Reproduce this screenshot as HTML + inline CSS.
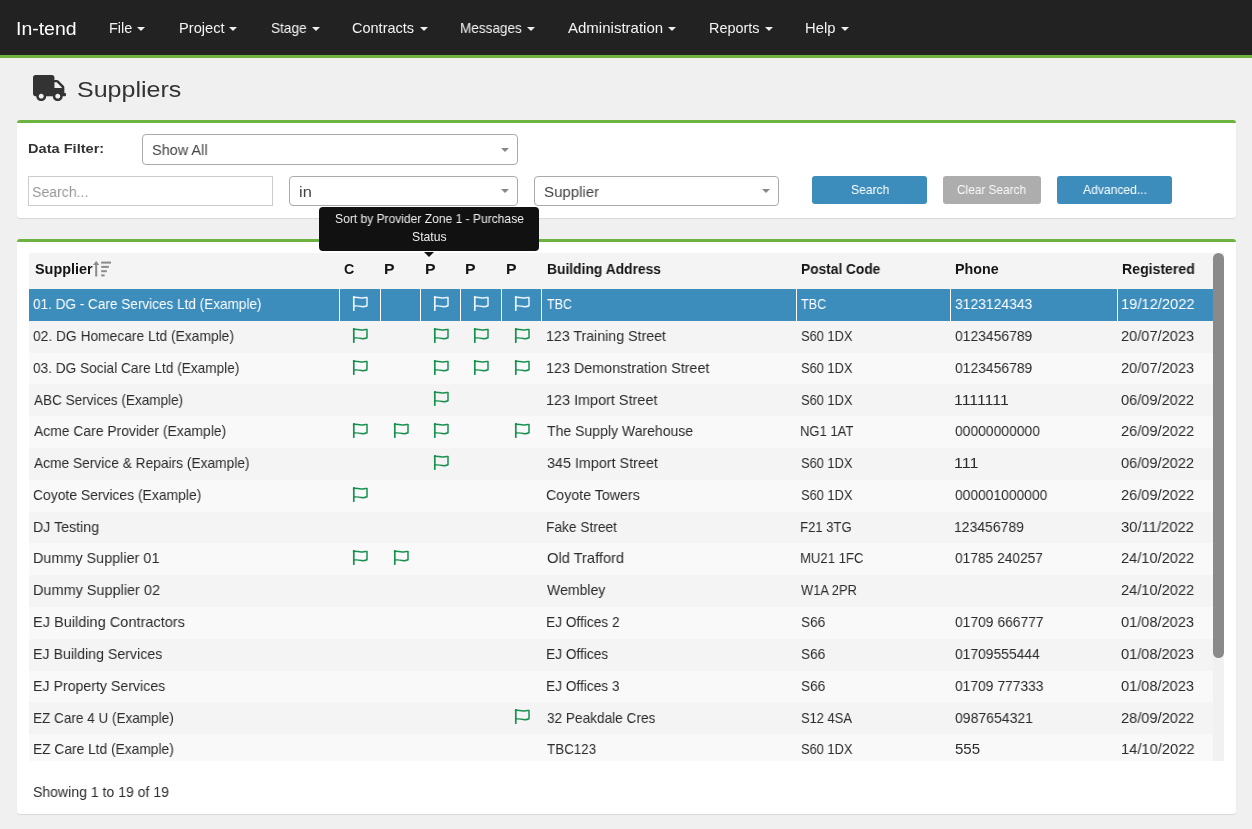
<!DOCTYPE html><html><head><meta charset="utf-8"><style>
html,body{margin:0;padding:0;}
body{width:1252px;height:829px;overflow:hidden;background:#f0f0f0;position:relative;font-family:"Liberation Sans", sans-serif;}
.t{position:absolute;line-height:1;white-space:nowrap;will-change:transform;}
.abs{position:absolute;}
</style></head><body>
<div class="abs" style="left:0;top:0;width:1252px;height:55px;background:#222;"></div>
<div class="abs" style="left:0;top:55px;width:1252px;height:3px;background:#6db33f;"></div>
<div class="t " style="left:15.95px;top:20px;font-size:18px;color:#fff;font-weight:normal;transform:scaleX(1.0810);transform-origin:0 0;">In-tend</div>
<div class="t " style="left:109.04px;top:21px;font-size:14.4px;color:#f4f4f4;font-weight:normal;transform:scaleX(1.0054);transform-origin:0 0;">File</div>
<div style="position:absolute;left:137px;top:27px;width:0;height:0;border-left:4.0px solid transparent;border-right:4.0px solid transparent;border-top:4px solid #eee;"></div>
<div class="t " style="left:178.53px;top:21px;font-size:14.4px;color:#f4f4f4;font-weight:normal;transform:scaleX(1.0170);transform-origin:0 0;">Project</div>
<div style="position:absolute;left:229px;top:27px;width:0;height:0;border-left:4.0px solid transparent;border-right:4.0px solid transparent;border-top:4px solid #eee;"></div>
<div class="t " style="left:270.58px;top:21px;font-size:14.4px;color:#f4f4f4;font-weight:normal;transform:scaleX(0.9507);transform-origin:0 0;">Stage</div>
<div style="position:absolute;left:312px;top:27px;width:0;height:0;border-left:4.0px solid transparent;border-right:4.0px solid transparent;border-top:4px solid #eee;"></div>
<div class="t " style="left:352.47px;top:21px;font-size:14.4px;color:#f4f4f4;font-weight:normal;transform:scaleX(1.0081);transform-origin:0 0;">Contracts</div>
<div style="position:absolute;left:420px;top:27px;width:0;height:0;border-left:4.0px solid transparent;border-right:4.0px solid transparent;border-top:4px solid #eee;"></div>
<div class="t " style="left:460.02px;top:21px;font-size:14.4px;color:#f4f4f4;font-weight:normal;transform:scaleX(0.9405);transform-origin:0 0;">Messages</div>
<div style="position:absolute;left:527px;top:27px;width:0;height:0;border-left:4.0px solid transparent;border-right:4.0px solid transparent;border-top:4px solid #eee;"></div>
<div class="t " style="left:568.22px;top:21px;font-size:14.4px;color:#f4f4f4;font-weight:normal;transform:scaleX(1.0431);transform-origin:0 0;">Administration</div>
<div style="position:absolute;left:668px;top:27px;width:0;height:0;border-left:4.0px solid transparent;border-right:4.0px solid transparent;border-top:4px solid #eee;"></div>
<div class="t " style="left:709.05px;top:21px;font-size:14.4px;color:#f4f4f4;font-weight:normal;">Reports</div>
<div style="position:absolute;left:765px;top:27px;width:0;height:0;border-left:4.0px solid transparent;border-right:4.0px solid transparent;border-top:4px solid #eee;"></div>
<div class="t " style="left:805.32px;top:21px;font-size:14.4px;color:#f4f4f4;font-weight:normal;transform:scaleX(1.0264);transform-origin:0 0;">Help</div>
<div style="position:absolute;left:841px;top:27px;width:0;height:0;border-left:4.0px solid transparent;border-right:4.0px solid transparent;border-top:4px solid #eee;"></div>
<svg class="abs" style="left:33px;top:75px" width="33" height="26" viewBox="0 0 640 512" preserveAspectRatio="none"><path fill="#333" d="M624 352h-16V243.9c0-12.7-5.1-24.9-14.1-33.9L494 110.1c-9-9-21.2-14.1-33.9-14.1H416V48c0-26.5-21.5-48-48-48H48C21.5 0 0 21.5 0 48v320c0 26.5 21.5 48 48 48h16c0 53 43 96 96 96s96-43 96-96h128c0 53 43 96 96 96s96-43 96-96h48c8.8 0 16-7.2 16-16v-32c0-8.8-7.2-16-16-16zM160 464c-26.5 0-48-21.5-48-48s21.5-48 48-48 48 21.5 48 48-21.5 48-48 48zm320 0c-26.5 0-48-21.5-48-48s21.5-48 48-48 48 21.5 48 48-21.5 48-48 48zm80-208H416V144h44.1l99.9 99.9V256z"/></svg>
<div class="t " style="left:77.07px;top:79px;font-size:21.8px;color:#333;font-weight:normal;transform:scaleX(1.1485);transform-origin:0 0;">Suppliers</div>
<div class="abs" style="left:17px;top:120px;width:1219px;height:98px;background:#fff;border-top:3px solid #6db33f;border-radius:3px;box-sizing:border-box;box-shadow:0 1px 1px rgba(0,0,0,0.1);"></div>
<div class="t " style="left:27.85px;top:142px;font-size:13.2px;color:#333;font-weight:bold;transform:scaleX(1.1064);transform-origin:0 0;">Data Filter:</div>
<div class="abs" style="left:142px;top:134px;width:376px;height:31px;box-sizing:border-box;border:1px solid #aaa;border-radius:4px;background:#fff;"></div>
<div class="t " style="left:151.95px;top:142px;font-size:15.2px;color:#444;font-weight:normal;transform:scaleX(0.9537);transform-origin:0 0;">Show All</div>
<div style="position:absolute;left:501px;top:147.5px;width:0;height:0;border-left:4.0px solid transparent;border-right:4.0px solid transparent;border-top:4px solid #888;"></div>
<div class="abs" style="left:28px;top:176px;width:245px;height:30px;box-sizing:border-box;border:1px solid #ccc;background:#fff;"></div>
<div class="t " style="left:31.97px;top:184px;font-size:15.2px;color:#999;font-weight:normal;transform:scaleX(0.9277);transform-origin:0 0;">Search...</div>
<div class="abs" style="left:289px;top:176px;width:229px;height:30px;box-sizing:border-box;border:1px solid #aaa;border-radius:4px;background:#fff;"></div>
<div class="t " style="left:298.93px;top:184px;font-size:15.2px;color:#444;font-weight:normal;transform:scaleX(1.0812);transform-origin:0 0;">in</div>
<div style="position:absolute;left:501px;top:189.0px;width:0;height:0;border-left:4.0px solid transparent;border-right:4.0px solid transparent;border-top:4px solid #888;"></div>
<div class="abs" style="left:534px;top:176px;width:245px;height:30px;box-sizing:border-box;border:1px solid #aaa;border-radius:4px;background:#fff;"></div>
<div class="t " style="left:544.02px;top:184px;font-size:15.2px;color:#444;font-weight:normal;transform:scaleX(0.9891);transform-origin:0 0;">Supplier</div>
<div style="position:absolute;left:762px;top:189.0px;width:0;height:0;border-left:4.0px solid transparent;border-right:4.0px solid transparent;border-top:4px solid #888;"></div>
<div class="abs" style="left:812px;top:176px;width:115px;height:28px;background:#3c8dbc;border-radius:3px;"></div>
<div class="t " style="left:850.56px;top:184px;font-size:12.6px;color:#fff;font-weight:normal;transform:scaleX(0.9586);transform-origin:0 0;">Search</div>
<div class="abs" style="left:943px;top:176px;width:98px;height:28px;background:#adadad;border-radius:3px;"></div>
<div class="t " style="left:957.41px;top:184px;font-size:12.6px;color:#fafafa;font-weight:normal;transform:scaleX(0.9393);transform-origin:0 0;">Clear Search</div>
<div class="abs" style="left:1057px;top:176px;width:115px;height:28px;background:#3c8dbc;border-radius:3px;"></div>
<div class="t " style="left:1082.74px;top:184px;font-size:12.6px;color:#fff;font-weight:normal;transform:scaleX(0.9613);transform-origin:0 0;">Advanced...</div>
<div class="abs" style="left:17px;top:239px;width:1219px;height:575px;background:#fff;border-top:3px solid #6db33f;border-radius:3px;box-sizing:border-box;box-shadow:0 1px 1px rgba(0,0,0,0.1);"></div>
<div class="abs" style="left:29px;top:253px;width:1195px;height:508px;overflow:hidden;background:#f9f9f9;">
<div class="abs" style="left:0;top:0;width:1184px;height:36px;background:#f4f4f4;"></div>
<div class="t " style="left:5.57px;top:9px;font-size:14.2px;color:#151515;font-weight:bold;transform:scaleX(1.0167);transform-origin:0 0;">Supplier</div>
<div class="t " style="left:315.16px;top:9px;font-size:14.2px;color:#151515;font-weight:bold;transform:scaleX(0.9569);transform-origin:0 0;">C</div>
<div class="t " style="left:354.97px;top:9px;font-size:14.2px;color:#151515;font-weight:bold;transform:scaleX(1.1119);transform-origin:0 0;">P</div>
<div class="t " style="left:395.87px;top:9px;font-size:14.2px;color:#151515;font-weight:bold;transform:scaleX(1.1119);transform-origin:0 0;">P</div>
<div class="t " style="left:435.97px;top:9px;font-size:14.2px;color:#151515;font-weight:bold;transform:scaleX(1.1119);transform-origin:0 0;">P</div>
<div class="t " style="left:476.57px;top:9px;font-size:14.2px;color:#151515;font-weight:bold;transform:scaleX(1.1119);transform-origin:0 0;">P</div>
<div class="t " style="left:517.70px;top:9px;font-size:14.2px;color:#151515;font-weight:bold;transform:scaleX(0.9747);transform-origin:0 0;">Building Address</div>
<div class="t " style="left:772.11px;top:9px;font-size:14.2px;color:#151515;font-weight:bold;transform:scaleX(0.9671);transform-origin:0 0;">Postal Code</div>
<div class="t " style="left:926.07px;top:9px;font-size:14.2px;color:#151515;font-weight:bold;transform:scaleX(1.0081);transform-origin:0 0;">Phone</div>
<div class="t " style="left:1093.48px;top:9px;font-size:14.2px;color:#151515;font-weight:bold;transform:scaleX(0.9921);transform-origin:0 0;">Registered</div>
<svg class="abs" style="left:63.5px;top:7.5px" width="19" height="16" viewBox="0 0 19 16"><g fill="#8a8a8a"><rect x="2.2" y="2.5" width="2" height="13"/><path d="M3.2 0 L0 4 H6.4 Z"/><rect x="8.2" y="0.6" width="9.8" height="2"/><rect x="8.2" y="4.9" width="7.6" height="2"/><rect x="8.2" y="9.2" width="5.6" height="2"/><rect x="8.2" y="13.4" width="3.4" height="2"/></g></svg>
<div class="abs" style="left:0;top:36.00px;width:1184px;height:32.00px;background:#3c8dbc;"></div>
<div class="abs" style="left:310px;top:36.00px;width:1px;height:31.80px;background:#fff;"></div>
<div class="abs" style="left:351px;top:36.00px;width:1px;height:31.80px;background:#fff;"></div>
<div class="abs" style="left:391px;top:36.00px;width:1px;height:31.80px;background:#fff;"></div>
<div class="abs" style="left:431px;top:36.00px;width:1px;height:31.80px;background:#fff;"></div>
<div class="abs" style="left:472px;top:36.00px;width:1px;height:31.80px;background:#fff;"></div>
<div class="abs" style="left:512px;top:36.00px;width:1px;height:31.80px;background:#fff;"></div>
<div class="abs" style="left:767px;top:36.00px;width:1px;height:31.80px;background:#fff;"></div>
<div class="abs" style="left:921px;top:36.00px;width:1px;height:31.80px;background:#fff;"></div>
<div class="abs" style="left:1088px;top:36.00px;width:1px;height:31.80px;background:#fff;"></div>
<div class="t " style="left:4.26px;top:43px;font-size:15px;color:#fff;font-weight:normal;transform:scaleX(0.9047);transform-origin:0 0;">01. DG - Care Services Ltd (Example)</div>
<svg style="position:absolute;left:323.00px;top:43.00px" width="16" height="15" viewBox="0 0 16 15"><g fill="none" stroke="#eaf4fb" stroke-linejoin="round" stroke-linecap="round"><path d="M1.8 1.2 V14.3" stroke-width="1.7"/><path d="M1.8 1.2 C4.5 0.9 6.5 2.1 9.5 2 C11.8 1.9 13.2 1.3 15 1.6 V9.8 C13.3 10.6 11.5 10.9 9.5 10.5 C7 10 4.5 9.5 1.8 10.1" stroke-width="1.5"/></g><circle cx="1.9" cy="1.2" r="1.1" fill="#eaf4fb"/></svg>
<svg style="position:absolute;left:403.50px;top:43.00px" width="16" height="15" viewBox="0 0 16 15"><g fill="none" stroke="#eaf4fb" stroke-linejoin="round" stroke-linecap="round"><path d="M1.8 1.2 V14.3" stroke-width="1.7"/><path d="M1.8 1.2 C4.5 0.9 6.5 2.1 9.5 2 C11.8 1.9 13.2 1.3 15 1.6 V9.8 C13.3 10.6 11.5 10.9 9.5 10.5 C7 10 4.5 9.5 1.8 10.1" stroke-width="1.5"/></g><circle cx="1.9" cy="1.2" r="1.1" fill="#eaf4fb"/></svg>
<svg style="position:absolute;left:444.00px;top:43.00px" width="16" height="15" viewBox="0 0 16 15"><g fill="none" stroke="#eaf4fb" stroke-linejoin="round" stroke-linecap="round"><path d="M1.8 1.2 V14.3" stroke-width="1.7"/><path d="M1.8 1.2 C4.5 0.9 6.5 2.1 9.5 2 C11.8 1.9 13.2 1.3 15 1.6 V9.8 C13.3 10.6 11.5 10.9 9.5 10.5 C7 10 4.5 9.5 1.8 10.1" stroke-width="1.5"/></g><circle cx="1.9" cy="1.2" r="1.1" fill="#eaf4fb"/></svg>
<svg style="position:absolute;left:484.50px;top:43.00px" width="16" height="15" viewBox="0 0 16 15"><g fill="none" stroke="#eaf4fb" stroke-linejoin="round" stroke-linecap="round"><path d="M1.8 1.2 V14.3" stroke-width="1.7"/><path d="M1.8 1.2 C4.5 0.9 6.5 2.1 9.5 2 C11.8 1.9 13.2 1.3 15 1.6 V9.8 C13.3 10.6 11.5 10.9 9.5 10.5 C7 10 4.5 9.5 1.8 10.1" stroke-width="1.5"/></g><circle cx="1.9" cy="1.2" r="1.1" fill="#eaf4fb"/></svg>
<div class="t " style="left:517.95px;top:43px;font-size:15px;color:#fff;font-weight:normal;transform:scaleX(0.8316);transform-origin:0 0;">TBC</div>
<div class="t " style="left:772.05px;top:43px;font-size:15px;color:#fff;font-weight:normal;transform:scaleX(0.8385);transform-origin:0 0;">TBC</div>
<div class="t " style="left:925.54px;top:43px;font-size:15px;color:#fff;font-weight:normal;transform:scaleX(0.9266);transform-origin:0 0;">3123124343</div>
<div class="t " style="left:1091.90px;top:43px;font-size:15px;color:#fff;font-weight:normal;transform:scaleX(0.9795);transform-origin:0 0;">19/12/2022</div>
<div class="abs" style="left:0;top:67.80px;width:1184px;height:32.00px;background:#f4f4f4;"></div>
<div class="t " style="left:4.25px;top:75px;font-size:15px;color:#2b2b2b;font-weight:normal;transform:scaleX(0.9198);transform-origin:0 0;">02. DG Homecare Ltd (Example)</div>
<svg style="position:absolute;left:323.00px;top:74.80px" width="16" height="15" viewBox="0 0 16 15"><g fill="none" stroke="#17904f" stroke-linejoin="round" stroke-linecap="round"><path d="M1.8 1.2 V14.3" stroke-width="1.7"/><path d="M1.8 1.2 C4.5 0.9 6.5 2.1 9.5 2 C11.8 1.9 13.2 1.3 15 1.6 V9.8 C13.3 10.6 11.5 10.9 9.5 10.5 C7 10 4.5 9.5 1.8 10.1" stroke-width="1.5"/></g><circle cx="1.9" cy="1.2" r="1.1" fill="#17904f"/></svg>
<svg style="position:absolute;left:403.50px;top:74.80px" width="16" height="15" viewBox="0 0 16 15"><g fill="none" stroke="#17904f" stroke-linejoin="round" stroke-linecap="round"><path d="M1.8 1.2 V14.3" stroke-width="1.7"/><path d="M1.8 1.2 C4.5 0.9 6.5 2.1 9.5 2 C11.8 1.9 13.2 1.3 15 1.6 V9.8 C13.3 10.6 11.5 10.9 9.5 10.5 C7 10 4.5 9.5 1.8 10.1" stroke-width="1.5"/></g><circle cx="1.9" cy="1.2" r="1.1" fill="#17904f"/></svg>
<svg style="position:absolute;left:444.00px;top:74.80px" width="16" height="15" viewBox="0 0 16 15"><g fill="none" stroke="#17904f" stroke-linejoin="round" stroke-linecap="round"><path d="M1.8 1.2 V14.3" stroke-width="1.7"/><path d="M1.8 1.2 C4.5 0.9 6.5 2.1 9.5 2 C11.8 1.9 13.2 1.3 15 1.6 V9.8 C13.3 10.6 11.5 10.9 9.5 10.5 C7 10 4.5 9.5 1.8 10.1" stroke-width="1.5"/></g><circle cx="1.9" cy="1.2" r="1.1" fill="#17904f"/></svg>
<svg style="position:absolute;left:484.50px;top:74.80px" width="16" height="15" viewBox="0 0 16 15"><g fill="none" stroke="#17904f" stroke-linejoin="round" stroke-linecap="round"><path d="M1.8 1.2 V14.3" stroke-width="1.7"/><path d="M1.8 1.2 C4.5 0.9 6.5 2.1 9.5 2 C11.8 1.9 13.2 1.3 15 1.6 V9.8 C13.3 10.6 11.5 10.9 9.5 10.5 C7 10 4.5 9.5 1.8 10.1" stroke-width="1.5"/></g><circle cx="1.9" cy="1.2" r="1.1" fill="#17904f"/></svg>
<div class="t " style="left:517.14px;top:75px;font-size:15px;color:#2b2b2b;font-weight:normal;transform:scaleX(0.9460);transform-origin:0 0;">123 Training Street</div>
<div class="t " style="left:771.72px;top:75px;font-size:15px;color:#2b2b2b;font-weight:normal;transform:scaleX(0.8573);transform-origin:0 0;">S60 1DX</div>
<div class="t " style="left:925.54px;top:75px;font-size:15px;color:#2b2b2b;font-weight:normal;transform:scaleX(0.9266);transform-origin:0 0;">0123456789</div>
<div class="t " style="left:1092.27px;top:75px;font-size:15px;color:#2b2b2b;font-weight:normal;transform:scaleX(0.9735);transform-origin:0 0;">20/07/2023</div>
<div class="abs" style="left:0;top:99.60px;width:1184px;height:32.00px;background:#f9f9f9;"></div>
<div class="t " style="left:4.25px;top:107px;font-size:15px;color:#2b2b2b;font-weight:normal;transform:scaleX(0.9098);transform-origin:0 0;">03. DG Social Care Ltd (Example)</div>
<svg style="position:absolute;left:323.00px;top:106.60px" width="16" height="15" viewBox="0 0 16 15"><g fill="none" stroke="#17904f" stroke-linejoin="round" stroke-linecap="round"><path d="M1.8 1.2 V14.3" stroke-width="1.7"/><path d="M1.8 1.2 C4.5 0.9 6.5 2.1 9.5 2 C11.8 1.9 13.2 1.3 15 1.6 V9.8 C13.3 10.6 11.5 10.9 9.5 10.5 C7 10 4.5 9.5 1.8 10.1" stroke-width="1.5"/></g><circle cx="1.9" cy="1.2" r="1.1" fill="#17904f"/></svg>
<svg style="position:absolute;left:403.50px;top:106.60px" width="16" height="15" viewBox="0 0 16 15"><g fill="none" stroke="#17904f" stroke-linejoin="round" stroke-linecap="round"><path d="M1.8 1.2 V14.3" stroke-width="1.7"/><path d="M1.8 1.2 C4.5 0.9 6.5 2.1 9.5 2 C11.8 1.9 13.2 1.3 15 1.6 V9.8 C13.3 10.6 11.5 10.9 9.5 10.5 C7 10 4.5 9.5 1.8 10.1" stroke-width="1.5"/></g><circle cx="1.9" cy="1.2" r="1.1" fill="#17904f"/></svg>
<svg style="position:absolute;left:444.00px;top:106.60px" width="16" height="15" viewBox="0 0 16 15"><g fill="none" stroke="#17904f" stroke-linejoin="round" stroke-linecap="round"><path d="M1.8 1.2 V14.3" stroke-width="1.7"/><path d="M1.8 1.2 C4.5 0.9 6.5 2.1 9.5 2 C11.8 1.9 13.2 1.3 15 1.6 V9.8 C13.3 10.6 11.5 10.9 9.5 10.5 C7 10 4.5 9.5 1.8 10.1" stroke-width="1.5"/></g><circle cx="1.9" cy="1.2" r="1.1" fill="#17904f"/></svg>
<svg style="position:absolute;left:484.50px;top:106.60px" width="16" height="15" viewBox="0 0 16 15"><g fill="none" stroke="#17904f" stroke-linejoin="round" stroke-linecap="round"><path d="M1.8 1.2 V14.3" stroke-width="1.7"/><path d="M1.8 1.2 C4.5 0.9 6.5 2.1 9.5 2 C11.8 1.9 13.2 1.3 15 1.6 V9.8 C13.3 10.6 11.5 10.9 9.5 10.5 C7 10 4.5 9.5 1.8 10.1" stroke-width="1.5"/></g><circle cx="1.9" cy="1.2" r="1.1" fill="#17904f"/></svg>
<div class="t " style="left:517.12px;top:107px;font-size:15px;color:#2b2b2b;font-weight:normal;transform:scaleX(0.9557);transform-origin:0 0;">123 Demonstration Street</div>
<div class="t " style="left:771.72px;top:107px;font-size:15px;color:#2b2b2b;font-weight:normal;transform:scaleX(0.8573);transform-origin:0 0;">S60 1DX</div>
<div class="t " style="left:925.54px;top:107px;font-size:15px;color:#2b2b2b;font-weight:normal;transform:scaleX(0.9266);transform-origin:0 0;">0123456789</div>
<div class="t " style="left:1092.27px;top:107px;font-size:15px;color:#2b2b2b;font-weight:normal;transform:scaleX(0.9735);transform-origin:0 0;">20/07/2023</div>
<div class="abs" style="left:0;top:131.40px;width:1184px;height:32.00px;background:#f4f4f4;"></div>
<div class="t " style="left:4.73px;top:139px;font-size:15px;color:#2b2b2b;font-weight:normal;transform:scaleX(0.9035);transform-origin:0 0;">ABC Services (Example)</div>
<svg style="position:absolute;left:403.50px;top:138.40px" width="16" height="15" viewBox="0 0 16 15"><g fill="none" stroke="#17904f" stroke-linejoin="round" stroke-linecap="round"><path d="M1.8 1.2 V14.3" stroke-width="1.7"/><path d="M1.8 1.2 C4.5 0.9 6.5 2.1 9.5 2 C11.8 1.9 13.2 1.3 15 1.6 V9.8 C13.3 10.6 11.5 10.9 9.5 10.5 C7 10 4.5 9.5 1.8 10.1" stroke-width="1.5"/></g><circle cx="1.9" cy="1.2" r="1.1" fill="#17904f"/></svg>
<div class="t " style="left:517.12px;top:139px;font-size:15px;color:#2b2b2b;font-weight:normal;transform:scaleX(0.9610);transform-origin:0 0;">123 Import Street</div>
<div class="t " style="left:771.72px;top:139px;font-size:15px;color:#2b2b2b;font-weight:normal;transform:scaleX(0.8573);transform-origin:0 0;">S60 1DX</div>
<div class="t " style="left:924.91px;top:139px;font-size:15px;color:#2b2b2b;font-weight:normal;transform:scaleX(1.0582);transform-origin:0 0;">1111111</div>
<div class="t " style="left:1092.42px;top:139px;font-size:15px;color:#2b2b2b;font-weight:normal;transform:scaleX(0.9725);transform-origin:0 0;">06/09/2022</div>
<div class="abs" style="left:0;top:163.20px;width:1184px;height:32.00px;background:#f9f9f9;"></div>
<div class="t " style="left:4.73px;top:170px;font-size:15px;color:#2b2b2b;font-weight:normal;transform:scaleX(0.9257);transform-origin:0 0;">Acme Care Provider (Example)</div>
<svg style="position:absolute;left:323.00px;top:170.20px" width="16" height="15" viewBox="0 0 16 15"><g fill="none" stroke="#17904f" stroke-linejoin="round" stroke-linecap="round"><path d="M1.8 1.2 V14.3" stroke-width="1.7"/><path d="M1.8 1.2 C4.5 0.9 6.5 2.1 9.5 2 C11.8 1.9 13.2 1.3 15 1.6 V9.8 C13.3 10.6 11.5 10.9 9.5 10.5 C7 10 4.5 9.5 1.8 10.1" stroke-width="1.5"/></g><circle cx="1.9" cy="1.2" r="1.1" fill="#17904f"/></svg>
<svg style="position:absolute;left:363.50px;top:170.20px" width="16" height="15" viewBox="0 0 16 15"><g fill="none" stroke="#17904f" stroke-linejoin="round" stroke-linecap="round"><path d="M1.8 1.2 V14.3" stroke-width="1.7"/><path d="M1.8 1.2 C4.5 0.9 6.5 2.1 9.5 2 C11.8 1.9 13.2 1.3 15 1.6 V9.8 C13.3 10.6 11.5 10.9 9.5 10.5 C7 10 4.5 9.5 1.8 10.1" stroke-width="1.5"/></g><circle cx="1.9" cy="1.2" r="1.1" fill="#17904f"/></svg>
<svg style="position:absolute;left:403.50px;top:170.20px" width="16" height="15" viewBox="0 0 16 15"><g fill="none" stroke="#17904f" stroke-linejoin="round" stroke-linecap="round"><path d="M1.8 1.2 V14.3" stroke-width="1.7"/><path d="M1.8 1.2 C4.5 0.9 6.5 2.1 9.5 2 C11.8 1.9 13.2 1.3 15 1.6 V9.8 C13.3 10.6 11.5 10.9 9.5 10.5 C7 10 4.5 9.5 1.8 10.1" stroke-width="1.5"/></g><circle cx="1.9" cy="1.2" r="1.1" fill="#17904f"/></svg>
<svg style="position:absolute;left:484.50px;top:170.20px" width="16" height="15" viewBox="0 0 16 15"><g fill="none" stroke="#17904f" stroke-linejoin="round" stroke-linecap="round"><path d="M1.8 1.2 V14.3" stroke-width="1.7"/><path d="M1.8 1.2 C4.5 0.9 6.5 2.1 9.5 2 C11.8 1.9 13.2 1.3 15 1.6 V9.8 C13.3 10.6 11.5 10.9 9.5 10.5 C7 10 4.5 9.5 1.8 10.1" stroke-width="1.5"/></g><circle cx="1.9" cy="1.2" r="1.1" fill="#17904f"/></svg>
<div class="t " style="left:517.92px;top:170px;font-size:15px;color:#2b2b2b;font-weight:normal;transform:scaleX(0.9357);transform-origin:0 0;">The Supply Warehouse</div>
<div class="t " style="left:771.26px;top:170px;font-size:15px;color:#2b2b2b;font-weight:normal;transform:scaleX(0.8694);transform-origin:0 0;">NG1 1AT</div>
<div class="t " style="left:925.54px;top:170px;font-size:15px;color:#2b2b2b;font-weight:normal;transform:scaleX(0.9257);transform-origin:0 0;">00000000000</div>
<div class="t " style="left:1092.27px;top:170px;font-size:15px;color:#2b2b2b;font-weight:normal;transform:scaleX(0.9745);transform-origin:0 0;">26/09/2022</div>
<div class="abs" style="left:0;top:195.00px;width:1184px;height:32.00px;background:#f4f4f4;"></div>
<div class="t " style="left:4.73px;top:202px;font-size:15px;color:#2b2b2b;font-weight:normal;transform:scaleX(0.9168);transform-origin:0 0;">Acme Service &amp; Repairs (Example)</div>
<svg style="position:absolute;left:403.50px;top:202.00px" width="16" height="15" viewBox="0 0 16 15"><g fill="none" stroke="#17904f" stroke-linejoin="round" stroke-linecap="round"><path d="M1.8 1.2 V14.3" stroke-width="1.7"/><path d="M1.8 1.2 C4.5 0.9 6.5 2.1 9.5 2 C11.8 1.9 13.2 1.3 15 1.6 V9.8 C13.3 10.6 11.5 10.9 9.5 10.5 C7 10 4.5 9.5 1.8 10.1" stroke-width="1.5"/></g><circle cx="1.9" cy="1.2" r="1.1" fill="#17904f"/></svg>
<div class="t " style="left:517.63px;top:202px;font-size:15px;color:#2b2b2b;font-weight:normal;transform:scaleX(0.9566);transform-origin:0 0;">345 Import Street</div>
<div class="t " style="left:771.72px;top:202px;font-size:15px;color:#2b2b2b;font-weight:normal;transform:scaleX(0.8573);transform-origin:0 0;">S60 1DX</div>
<div class="t " style="left:924.89px;top:202px;font-size:15px;color:#2b2b2b;font-weight:normal;transform:scaleX(1.0753);transform-origin:0 0;">111</div>
<div class="t " style="left:1092.42px;top:202px;font-size:15px;color:#2b2b2b;font-weight:normal;transform:scaleX(0.9725);transform-origin:0 0;">06/09/2022</div>
<div class="abs" style="left:0;top:226.80px;width:1184px;height:32.00px;background:#f9f9f9;"></div>
<div class="t " style="left:4.11px;top:234px;font-size:15px;color:#2b2b2b;font-weight:normal;transform:scaleX(0.9257);transform-origin:0 0;">Coyote Services (Example)</div>
<svg style="position:absolute;left:323.00px;top:233.80px" width="16" height="15" viewBox="0 0 16 15"><g fill="none" stroke="#17904f" stroke-linejoin="round" stroke-linecap="round"><path d="M1.8 1.2 V14.3" stroke-width="1.7"/><path d="M1.8 1.2 C4.5 0.9 6.5 2.1 9.5 2 C11.8 1.9 13.2 1.3 15 1.6 V9.8 C13.3 10.6 11.5 10.9 9.5 10.5 C7 10 4.5 9.5 1.8 10.1" stroke-width="1.5"/></g><circle cx="1.9" cy="1.2" r="1.1" fill="#17904f"/></svg>
<div class="t " style="left:517.49px;top:234px;font-size:15px;color:#2b2b2b;font-weight:normal;transform:scaleX(0.9473);transform-origin:0 0;">Coyote Towers</div>
<div class="t " style="left:771.72px;top:234px;font-size:15px;color:#2b2b2b;font-weight:normal;transform:scaleX(0.8573);transform-origin:0 0;">S60 1DX</div>
<div class="t " style="left:925.55px;top:234px;font-size:15px;color:#2b2b2b;font-weight:normal;transform:scaleX(0.9219);transform-origin:0 0;">000001000000</div>
<div class="t " style="left:1092.27px;top:234px;font-size:15px;color:#2b2b2b;font-weight:normal;transform:scaleX(0.9745);transform-origin:0 0;">26/09/2022</div>
<div class="abs" style="left:0;top:258.60px;width:1184px;height:32.00px;background:#f4f4f4;"></div>
<div class="t " style="left:3.66px;top:266px;font-size:15px;color:#2b2b2b;font-weight:normal;transform:scaleX(0.9471);transform-origin:0 0;">DJ Testing</div>
<div class="t " style="left:517.10px;top:266px;font-size:15px;color:#2b2b2b;font-weight:normal;transform:scaleX(0.9147);transform-origin:0 0;">Fake Street</div>
<div class="t " style="left:771.25px;top:266px;font-size:15px;color:#2b2b2b;font-weight:normal;transform:scaleX(0.8731);transform-origin:0 0;">F21 3TG</div>
<div class="t " style="left:925.05px;top:266px;font-size:15px;color:#2b2b2b;font-weight:normal;transform:scaleX(0.9307);transform-origin:0 0;">123456789</div>
<div class="t " style="left:1092.41px;top:266px;font-size:15px;color:#2b2b2b;font-weight:normal;transform:scaleX(0.9876);transform-origin:0 0;">30/11/2022</div>
<div class="abs" style="left:0;top:290.40px;width:1184px;height:32.00px;background:#f9f9f9;"></div>
<div class="t " style="left:3.65px;top:297px;font-size:15px;color:#2b2b2b;font-weight:normal;transform:scaleX(0.9595);transform-origin:0 0;">Dummy Supplier 01</div>
<svg style="position:absolute;left:323.00px;top:297.40px" width="16" height="15" viewBox="0 0 16 15"><g fill="none" stroke="#17904f" stroke-linejoin="round" stroke-linecap="round"><path d="M1.8 1.2 V14.3" stroke-width="1.7"/><path d="M1.8 1.2 C4.5 0.9 6.5 2.1 9.5 2 C11.8 1.9 13.2 1.3 15 1.6 V9.8 C13.3 10.6 11.5 10.9 9.5 10.5 C7 10 4.5 9.5 1.8 10.1" stroke-width="1.5"/></g><circle cx="1.9" cy="1.2" r="1.1" fill="#17904f"/></svg>
<svg style="position:absolute;left:363.50px;top:297.40px" width="16" height="15" viewBox="0 0 16 15"><g fill="none" stroke="#17904f" stroke-linejoin="round" stroke-linecap="round"><path d="M1.8 1.2 V14.3" stroke-width="1.7"/><path d="M1.8 1.2 C4.5 0.9 6.5 2.1 9.5 2 C11.8 1.9 13.2 1.3 15 1.6 V9.8 C13.3 10.6 11.5 10.9 9.5 10.5 C7 10 4.5 9.5 1.8 10.1" stroke-width="1.5"/></g><circle cx="1.9" cy="1.2" r="1.1" fill="#17904f"/></svg>
<div class="t " style="left:517.54px;top:297px;font-size:15px;color:#2b2b2b;font-weight:normal;transform:scaleX(0.9773);transform-origin:0 0;">Old Trafford</div>
<div class="t " style="left:771.25px;top:297px;font-size:15px;color:#2b2b2b;font-weight:normal;transform:scaleX(0.8747);transform-origin:0 0;">MU21 1FC</div>
<div class="t " style="left:925.55px;top:297px;font-size:15px;color:#2b2b2b;font-weight:normal;transform:scaleX(0.9167);transform-origin:0 0;">01785 240257</div>
<div class="t " style="left:1092.27px;top:297px;font-size:15px;color:#2b2b2b;font-weight:normal;transform:scaleX(0.9745);transform-origin:0 0;">24/10/2022</div>
<div class="abs" style="left:0;top:322.20px;width:1184px;height:32.00px;background:#f4f4f4;"></div>
<div class="t " style="left:3.64px;top:329px;font-size:15px;color:#2b2b2b;font-weight:normal;transform:scaleX(0.9642);transform-origin:0 0;">Dummy Supplier 02</div>
<div class="t " style="left:518.13px;top:329px;font-size:15px;color:#2b2b2b;font-weight:normal;transform:scaleX(0.9372);transform-origin:0 0;">Wembley</div>
<div class="t " style="left:772.24px;top:329px;font-size:15px;color:#2b2b2b;font-weight:normal;transform:scaleX(0.8588);transform-origin:0 0;">W1A 2PR</div>
<div class="t " style="left:1092.27px;top:329px;font-size:15px;color:#2b2b2b;font-weight:normal;transform:scaleX(0.9745);transform-origin:0 0;">24/10/2022</div>
<div class="abs" style="left:0;top:354.00px;width:1184px;height:32.00px;background:#f9f9f9;"></div>
<div class="t " style="left:3.64px;top:361px;font-size:15px;color:#2b2b2b;font-weight:normal;transform:scaleX(0.9689);transform-origin:0 0;">EJ Building Contractors</div>
<div class="t " style="left:517.10px;top:361px;font-size:15px;color:#2b2b2b;font-weight:normal;transform:scaleX(0.9135);transform-origin:0 0;">EJ Offices 2</div>
<div class="t " style="left:771.68px;top:361px;font-size:15px;color:#2b2b2b;font-weight:normal;transform:scaleX(0.9112);transform-origin:0 0;">S66</div>
<div class="t " style="left:925.55px;top:361px;font-size:15px;color:#2b2b2b;font-weight:normal;transform:scaleX(0.9231);transform-origin:0 0;">01709 666777</div>
<div class="t " style="left:1092.42px;top:361px;font-size:15px;color:#2b2b2b;font-weight:normal;transform:scaleX(0.9715);transform-origin:0 0;">01/08/2023</div>
<div class="abs" style="left:0;top:385.80px;width:1184px;height:32.00px;background:#f4f4f4;"></div>
<div class="t " style="left:3.67px;top:393px;font-size:15px;color:#2b2b2b;font-weight:normal;transform:scaleX(0.9452);transform-origin:0 0;">EJ Building Services</div>
<div class="t " style="left:517.10px;top:393px;font-size:15px;color:#2b2b2b;font-weight:normal;transform:scaleX(0.9130);transform-origin:0 0;">EJ Offices</div>
<div class="t " style="left:771.68px;top:393px;font-size:15px;color:#2b2b2b;font-weight:normal;transform:scaleX(0.9112);transform-origin:0 0;">S66</div>
<div class="t " style="left:925.55px;top:393px;font-size:15px;color:#2b2b2b;font-weight:normal;transform:scaleX(0.9231);transform-origin:0 0;">01709555444</div>
<div class="t " style="left:1092.42px;top:393px;font-size:15px;color:#2b2b2b;font-weight:normal;transform:scaleX(0.9715);transform-origin:0 0;">01/08/2023</div>
<div class="abs" style="left:0;top:417.60px;width:1184px;height:32.00px;background:#f9f9f9;"></div>
<div class="t " style="left:3.67px;top:425px;font-size:15px;color:#2b2b2b;font-weight:normal;transform:scaleX(0.9443);transform-origin:0 0;">EJ Property Services</div>
<div class="t " style="left:517.10px;top:425px;font-size:15px;color:#2b2b2b;font-weight:normal;transform:scaleX(0.9126);transform-origin:0 0;">EJ Offices 3</div>
<div class="t " style="left:771.68px;top:425px;font-size:15px;color:#2b2b2b;font-weight:normal;transform:scaleX(0.9112);transform-origin:0 0;">S66</div>
<div class="t " style="left:925.55px;top:425px;font-size:15px;color:#2b2b2b;font-weight:normal;transform:scaleX(0.9223);transform-origin:0 0;">01709 777333</div>
<div class="t " style="left:1092.42px;top:425px;font-size:15px;color:#2b2b2b;font-weight:normal;transform:scaleX(0.9715);transform-origin:0 0;">01/08/2023</div>
<div class="abs" style="left:0;top:449.40px;width:1184px;height:32.00px;background:#f4f4f4;"></div>
<div class="t " style="left:3.72px;top:457px;font-size:15px;color:#2b2b2b;font-weight:normal;transform:scaleX(0.9028);transform-origin:0 0;">EZ Care 4 U (Example)</div>
<svg style="position:absolute;left:484.50px;top:456.40px" width="16" height="15" viewBox="0 0 16 15"><g fill="none" stroke="#17904f" stroke-linejoin="round" stroke-linecap="round"><path d="M1.8 1.2 V14.3" stroke-width="1.7"/><path d="M1.8 1.2 C4.5 0.9 6.5 2.1 9.5 2 C11.8 1.9 13.2 1.3 15 1.6 V9.8 C13.3 10.6 11.5 10.9 9.5 10.5 C7 10 4.5 9.5 1.8 10.1" stroke-width="1.5"/></g><circle cx="1.9" cy="1.2" r="1.1" fill="#17904f"/></svg>
<div class="t " style="left:517.65px;top:457px;font-size:15px;color:#2b2b2b;font-weight:normal;transform:scaleX(0.9084);transform-origin:0 0;">32 Peakdale Cres</div>
<div class="t " style="left:771.72px;top:457px;font-size:15px;color:#2b2b2b;font-weight:normal;transform:scaleX(0.8598);transform-origin:0 0;">S12 4SA</div>
<div class="t " style="left:925.54px;top:457px;font-size:15px;color:#2b2b2b;font-weight:normal;transform:scaleX(0.9348);transform-origin:0 0;">0987654321</div>
<div class="t " style="left:1092.27px;top:457px;font-size:15px;color:#2b2b2b;font-weight:normal;transform:scaleX(0.9745);transform-origin:0 0;">28/09/2022</div>
<div class="abs" style="left:0;top:481.20px;width:1184px;height:32.00px;background:#f9f9f9;"></div>
<div class="t " style="left:3.70px;top:488px;font-size:15px;color:#2b2b2b;font-weight:normal;transform:scaleX(0.9175);transform-origin:0 0;">EZ Care Ltd (Example)</div>
<div class="t " style="left:517.93px;top:488px;font-size:15px;color:#2b2b2b;font-weight:normal;transform:scaleX(0.8926);transform-origin:0 0;">TBC123</div>
<div class="t " style="left:771.72px;top:488px;font-size:15px;color:#2b2b2b;font-weight:normal;transform:scaleX(0.8573);transform-origin:0 0;">S60 1DX</div>
<div class="t " style="left:925.50px;top:488px;font-size:15px;color:#2b2b2b;font-weight:normal;transform:scaleX(0.9968);transform-origin:0 0;">555</div>
<div class="t " style="left:1091.90px;top:488px;font-size:15px;color:#2b2b2b;font-weight:normal;transform:scaleX(0.9795);transform-origin:0 0;">14/10/2022</div>
<div class="abs" style="left:1184px;top:0;width:11px;height:508px;background:#f1f1f1;"></div>
<div class="abs" style="left:1184px;top:0;width:11px;height:405px;background:#8a8a8a;border-radius:5.5px;"></div>
</div>
<div class="t " style="left:33.07px;top:785px;font-size:14.4px;color:#2b2b2b;font-weight:normal;transform:scaleX(0.9759);transform-origin:0 0;">Showing 1 to 19 of 19</div>
<div class="abs" style="left:319px;top:207px;width:220px;height:44px;background:#111;border-radius:4px;"></div>
<div class="abs" style="left:424px;top:252.2px;width:0;height:0;border-left:5px solid transparent;border-right:5px solid transparent;border-top:5.2px solid #111;"></div>
<div class="t " style="left:335.16px;top:213px;font-size:12.2px;color:#eee;font-weight:normal;transform:scaleX(0.9888);transform-origin:0 0;">Sort by Provider Zone 1 - Purchase</div>
<div class="t " style="left:412.25px;top:231px;font-size:12.2px;color:#eee;font-weight:normal;">Status</div>
</body></html>
